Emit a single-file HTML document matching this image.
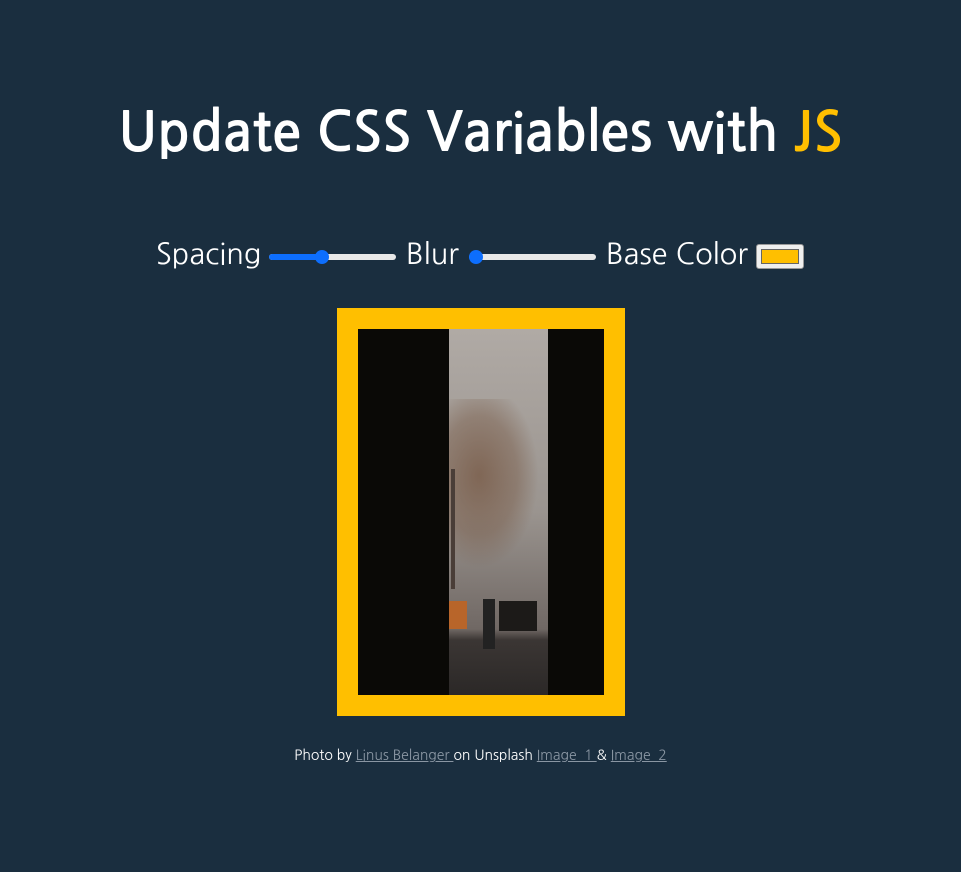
<!DOCTYPE html>
<html><head><meta charset="utf-8"><style>
html,body{margin:0;padding:0;width:961px;height:872px;background:#1a2e3f;overflow:hidden}
body{font-family:"NanumGothic","Liberation Sans",sans-serif;color:#fff;position:relative}
h1{position:absolute;left:0;width:961px;top:102px;margin:0;text-align:center;font-size:54px;font-weight:bold;line-height:64px;white-space:nowrap}
h1 span{color:#ffbf00}
.ctl{position:absolute;top:237px;font-size:29px;line-height:36px;white-space:nowrap}
.track{position:absolute;height:6px;border-radius:3px;background:#e8e8e8;top:254px}
.fill{position:absolute;height:6px;border-radius:3px;background:#0d6efd;top:254px}
.thumb{position:absolute;width:14px;height:14px;border-radius:50%;background:#0d6efd;top:250px}
.sw{position:absolute;left:756px;top:244px;width:46px;height:23px;background:#efefef;border:1px solid #999;border-radius:3px}
.sw div{position:absolute;left:4px;top:4px;width:38px;height:15px;background:#ffbf00;border:1px solid #666;box-sizing:border-box}
.frame{position:absolute;left:337px;top:308px;width:288px;height:408px;background:#ffbf00}
.img{position:absolute;left:21px;top:21px;width:246px;height:366px;background:#0a0906;overflow:hidden}
.scene{position:absolute;left:91px;top:0;width:99px;height:366px;overflow:hidden;background:linear-gradient(#b0aaa5,#9a948f 50%,#706864 82%,#3b3634 85%,#2b2827)}
.tree{position:absolute;left:-10px;top:70px;width:100px;height:170px;background:radial-gradient(ellipse at 40% 45%,rgba(120,90,70,.8),rgba(120,90,70,.45) 45%,transparent 70%)}
.trunk{position:absolute;left:2px;top:140px;width:4px;height:120px;background:#4a3e38}
.bin1{position:absolute;left:0;top:272px;width:18px;height:28px;background:#b8652a}
.bin2{position:absolute;left:50px;top:272px;width:38px;height:30px;background:#1c1a18}
.man{position:absolute;left:34px;top:270px;width:12px;height:50px;background:#222}
.cap{position:absolute;left:0;width:961px;top:747px;text-align:center;font-size:14px;white-space:nowrap}
.cap a{color:#8a96a3;text-decoration:underline}
</style></head><body>
<h1>Update CSS Variables with <span>JS</span></h1>
<div class="ctl" style="left:156px">Spacing</div>
<div class="track" style="left:269px;width:127px"></div>
<div class="fill" style="left:269px;width:53px"></div>
<div class="thumb" style="left:315px"></div>
<div class="ctl" style="left:406px">Blur</div>
<div class="track" style="left:469px;width:127px"></div>
<div class="thumb" style="left:469px"></div>
<div class="ctl" style="left:606px">Base Color</div>
<div class="sw"><div></div></div>
<div class="frame"><div class="img"><div class="scene"><div class="tree"></div><div class="trunk"></div><div class="bin1"></div><div class="bin2"></div><div class="man"></div></div></div></div>
<div class="cap">Photo by <a>Linus Belanger </a>on Unsplash <a>Image_1 </a>&amp; <a>Image_2</a></div>
</body></html>
